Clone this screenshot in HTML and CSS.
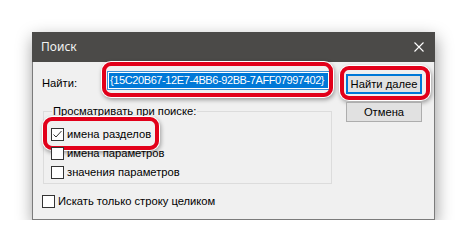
FILE: index.html
```html
<!DOCTYPE html>
<html lang="ru">
<head>
<meta charset="utf-8">
<title>Поиск</title>
<link rel="stylesheet" href="styles.css">
</head>
<body>
<div class="dialog">
  <div class="titlebar">
    <span class="title">Поиск</span>
    <svg class="close" width="10" height="10" viewBox="0 0 10 10"><path d="M0.5 0.5L9.5 9.5M9.5 0.5L0.5 9.5" stroke="#ffffff" stroke-width="1.1" fill="none"/></svg>
  </div>
  <div class="body">
    <div class="main">
      <div class="find-row">
        <span class="label">Найти:</span>
        <div class="field mark-field"><span class="sel">{15C20B67-12E7-4BB6-92BB-7AFF07997402}</span></div>
      </div>
      <fieldset class="group">
        <legend class="legend">Просматривать при поиске:</legend>
        <div class="check mark-check"><span class="box"><svg width="11" height="11" viewBox="0 0 11 11"><path d="M1.5 5.5L4 8L9.5 2" stroke="#333" stroke-width="1" fill="none"/></svg></span><span>имена разделов</span></div>
        <div class="check"><span class="box"></span><span>имена параметров</span></div>
        <div class="check"><span class="box"></span><span>значения параметров</span></div>
      </fieldset>
      <div class="check whole"><span class="box"></span><span>Искать только строку целиком</span></div>
    </div>
    <div class="buttons">
      <div class="btn default mark-btn">Найти далее</div>
      <div class="btn">Отмена</div>
    </div>
  </div>
</div>
</body>
</html>
```

FILE: styles.css
```css
html, body {
  margin: 0;
  padding: 0;
  background: #ffffff;
}

body {
  padding: 32px 0 0 32px;
  font-family: "Liberation Sans", Arial, sans-serif;
  font-size: 11.2px;
  color: #000;
}

.dialog {
  width: 403px;
  box-sizing: border-box;
  border: 1px solid #7b7b7b;
  border-top: none;
  background: #f0f0f0;
  box-shadow: 1px 6px 16px rgba(0, 0, 0, 0.4);
}

.titlebar {
  height: 30px;
  margin: 0 -1px;
  background: #4b4a48;
  display: flex;
  align-items: center;
  justify-content: space-between;
  padding: 0 11px 0 9px;
}

.title {
  font-family: "Noto Sans", sans-serif;
  font-size: 12px;
  color: #f2f2f2;
  line-height: 30px;
}

.close {
  display: block;
}

.body {
  display: flex;
  gap: 14px;
  padding: 9px 12px 11px 9px;
}

.main {
  width: 290px;
  display: flex;
  flex-direction: column;
}

.find-row {
  display: flex;
  align-items: flex-start;
  height: 19px;
}

.label {
  width: 65px;
  line-height: 13px;
  margin-top: 6px;
}

.field {
  position: relative;
  width: 223px;
  height: 19px;
  box-sizing: border-box;
  border: 1px solid #3d8fd6;
  background: #fff;
  padding: 1px;
}

.sel {
  display: block;
  height: 15px;
  line-height: 15px;
  background: #0078d7;
  color: #fff;
  padding: 0 1px;
  font-size: 11px;
  letter-spacing: -0.4px;
  white-space: nowrap;
  overflow: hidden;
}

.group {
  margin: 15px 0 0 1px;
  width: 289px;
  box-sizing: border-box;
  border: 1px solid #dcdcdc;
  padding: 10px 7px 4px 7px;
  display: flex;
  flex-direction: column;
  gap: 6px;
  min-width: 0;
}

.legend {
  padding: 0 1px;
  margin-left: 1px;
  line-height: 13px;
}

.check {
  display: flex;
  align-items: center;
  align-self: flex-start;
  height: 13px;
  gap: 3px;
  line-height: 13px;
  position: relative;
}

.whole {
  margin-top: 11px;
}

.box {
  width: 13px;
  height: 13px;
  box-sizing: border-box;
  border: 1px solid #333;
  background: #fff;
  display: flex;
  align-items: center;
  justify-content: center;
}

.box svg {
  display: block;
}

.buttons {
  display: flex;
  flex-direction: column;
  gap: 8px;
  padding-top: 3px;
}

.btn {
  position: relative;
  width: 76px;
  height: 20px;
  box-sizing: border-box;
  border: 1px solid #adadad;
  background: #e1e1e1;
  display: flex;
  align-items: center;
  justify-content: center;
}

.btn.default {
  border: 2px solid #0078d7;
}

.mark-field::after,
.mark-check::after,
.mark-btn::after {
  content: "";
  position: absolute;
  border: 4px solid #e2001a;
  border-radius: 9px;
  box-shadow: 0 0 0 1px #ffffff, 1px 2px 4px 1px rgba(0, 0, 0, 0.35);
  pointer-events: none;
}

.mark-field::after {
  top: -10px;
  right: -4px;
  bottom: -8px;
  left: -6px;
}

.mark-check::after {
  top: -11px;
  right: -8px;
  bottom: -9px;
  left: -8px;
}

.mark-btn::after {
  top: -10px;
  right: -10px;
  bottom: -8px;
  left: -8px;
}
```
